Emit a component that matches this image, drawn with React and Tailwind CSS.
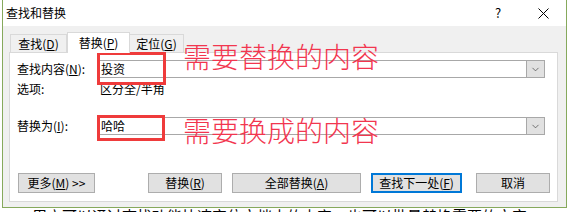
import { ChevronDown } from 'lucide-react';

const FONT = { fontFamily: '"Noto Sans CJK SC", "Noto Sans", sans-serif' };

const Combo = ({ value }) => (
  <div className="flex-1 h-[18px] flex items-stretch border border-[#a8a8a8] bg-white mr-[5px]">
    <div className="flex-1 flex items-center pl-[3px] text-[12px] text-black">{value}</div>
    <div className="w-[18px] bg-[#e1e1e1] border-l border-[#a8a8a8] flex items-center justify-center">
      <ChevronDown className="w-[11px] h-[11px] text-[#404040]" strokeWidth={1.5} />
    </div>
  </div>
);

const Btn = ({ children, className = '', focused = false }) => (
  <div
    className={`h-[20px] flex items-center justify-center text-[12px] text-black bg-[#e1e1e1] ${
      focused ? 'border-2 border-[#0078d7]' : 'border border-[#adadad]'
    } ${className}`}
  >
    {children}
  </div>
);

export default function App() {
  return (
    <div className="relative w-[569px] h-[212px] bg-white overflow-hidden" style={FONT}>
      {/* dialog */}
      <div className="ml-[2px] w-[565px] h-[208px] flex flex-col border-x border-b border-[#86a95c]">
        {/* title bar */}
        <div className="h-[26px] bg-white flex items-center pl-[3px] text-[12px] text-black">
          <span>查找和替换</span>
          <div className="ml-auto w-[78px] flex items-center">
            <span className="w-[20px] text-center text-[13px]">?</span>
            <svg width="11" height="11" viewBox="0 0 11 11" className="ml-[30px]">
              <path d="M0.5 0.5 L10.5 10.5 M10.5 0.5 L0.5 10.5" stroke="#000" strokeWidth="1" />
            </svg>
          </div>
        </div>

        {/* body */}
        <div className="flex-1 bg-[#f0f0f0] pl-[6px] pt-[6px]">
          {/* tabs */}
          <div className="flex items-end h-[20px] text-[12px] text-black">
            <div className="ml-[1px] w-[57px] h-[18px] flex items-center justify-center border border-b-0 border-[#d9d9d9] bg-[#f0f0f0]">
              查找(<u>D</u>)
            </div>
            <div className="relative z-10 -mb-[1px] w-[63px] h-[21px] flex items-center justify-center border border-b-0 border-[#d9d9d9] bg-white">
              替换(<u>P</u>)
            </div>
            <div className="w-[54px] h-[18px] flex items-center justify-center border border-b-0 border-l-0 border-[#d9d9d9] bg-[#f0f0f0]">
              定位(<u>G</u>)
            </div>
          </div>

          {/* panel */}
          <div className="w-[549px] h-[150px] bg-white border border-[#d9d9d9] px-[7px] flex flex-col text-[12px] text-black">
            <div className="mt-[7px] flex items-center">
              <span className="w-[80px]">查找内容(<u>N</u>):</span>
              <Combo value="投资" />
            </div>
            <div className="mt-[4px] h-[14px] flex items-center">
              <span className="w-[83px]">选项:</span>
              <span>区分全/半角</span>
            </div>
            <div className="mt-[21px] flex items-center">
              <span className="w-[80px]">替换为(<u>I</u>):</span>
              <Combo value="哈哈" />
            </div>
            <div className="mt-[38px] flex items-center">
              <Btn className="ml-[1px] w-[77px]">
                更多(<u>M</u>) &gt;&gt;
              </Btn>
              <Btn className="ml-[53px] w-[74px]">
                替换(<u>R</u>)
              </Btn>
              <Btn className="ml-[10px] w-[129px]">
                全部替换(<u>A</u>)
              </Btn>
              <Btn focused className="ml-[10px] w-[91px]">
                查找下一处(<u>F</u>)
              </Btn>
              <Btn className="ml-[14px] w-[74px]">取消</Btn>
            </div>
          </div>
        </div>
      </div>

      {/* document text behind the dialog, only its top edge shows */}
      <div className="h-[4px] overflow-hidden pl-[32px]">
        <div className="text-[15px] leading-[16px] text-black whitespace-nowrap">
          用户可以通过查找功能快速定位文档中的内容，也可以批量替换需要的文字。
        </div>
      </div>

      {/* annotations */}
      <div className="absolute left-[97px] top-[52px] w-[69px] h-[33px] border-[3px] border-[#ef3b3b]" />
      <div className="absolute left-[97px] top-[115px] w-[68px] h-[26px] border-[3px] border-[#ef3b3b]" />
      <div className="absolute left-[183px] top-[41px] text-[28px] leading-[30px] font-light text-[#f2364f] whitespace-nowrap">
        需要替换的内容
      </div>
      <div className="absolute left-[183px] top-[115px] text-[28px] leading-[30px] font-light text-[#f2364f] whitespace-nowrap">
        需要换成的内容
      </div>
    </div>
  );
}
